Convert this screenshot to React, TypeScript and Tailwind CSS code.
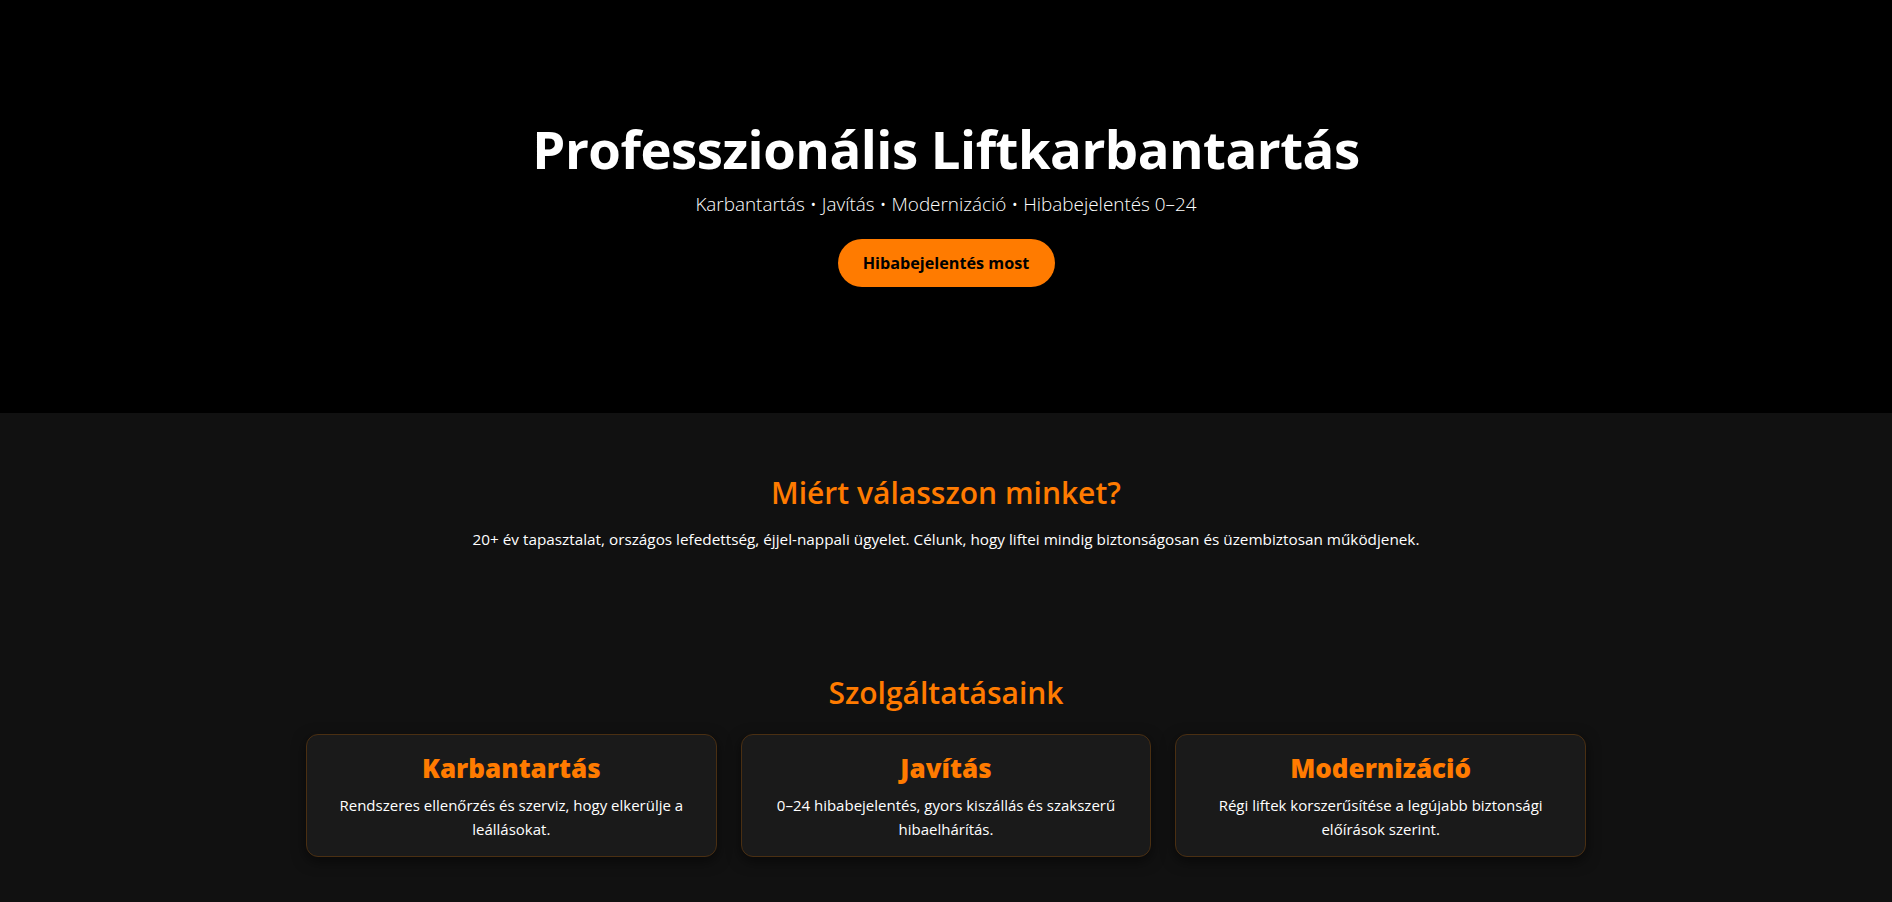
import React from "react";

const services = [
  {
    title: "Karbantartás",
    text: "Rendszeres ellenőrzés és szerviz, hogy elkerülje a leállásokat.",
  },
  {
    title: "Javítás",
    text: "0–24 hibabejelentés, gyors kiszállás és szakszerű hibaelhárítás.",
  },
  {
    title: "Modernizáció",
    text: "Régi liftek korszerűsítése a legújabb biztonsági előírások szerint.",
  },
];

export default function App() {
  return (
    <div className="min-h-screen bg-[#111111] font-['Open_Sans',sans-serif] text-white">
      <header className="flex h-[413px] flex-col items-center bg-black pt-[115px] text-center">
        <h1 className="text-[52.7px] font-bold leading-[67px] tracking-[-0.5px] text-white">
          Professzionális Liftkarbantartás
        </h1>
        <p className="mt-[8px] text-[18.9px] font-light leading-[28px] text-white">
          Karbantartás • Javítás • Modernizáció • Hibabejelentés 0–24
        </p>
        <button className="mt-[21px] h-[48px] w-[217px] rounded-full bg-[#ff7b00] text-[16.2px] font-bold text-black">
          Hibabejelentés most
        </button>
      </header>

      <section className="flex flex-col items-center pt-[60px] text-center">
        <h2 className="text-[30px] font-semibold leading-[40px] text-[#ff7b00]">
          Miért válasszon minket?
        </h2>
        <p className="mt-[14px] text-[15.3px] leading-[24px] text-white">
          20+ év tapasztalat, országos lefedettség, éjjel-nappali ügyelet. Célunk, hogy liftei mindig
          biztonságosan és üzembiztosan működjenek.
        </p>
      </section>

      <section className="flex flex-col items-center pt-[122px] pb-[45px] text-center">
        <h2 className="text-[30px] font-semibold leading-[40px] text-[#ff7b00]">
          Szolgáltatásaink
        </h2>
        <div className="mt-[21px] grid w-[1280px] grid-cols-3 gap-[24px]">
          {services.map((s) => (
            <div
              key={s.title}
              className="flex h-[123px] flex-col items-center rounded-[12px] border border-[#4a2f12] bg-[#1a1a1a] px-[24px] pt-[16px] shadow-[0_4px_14px_rgba(0,0,0,0.55)]"
            >
              <h3 className="text-[26px] font-extrabold leading-[34px] text-[#ff7b00]">
                {s.title}
              </h3>
              <p className="mt-[8px] text-[15px] leading-[24px] text-white">{s.text}</p>
            </div>
          ))}
        </div>
      </section>
    </div>
  );
}
